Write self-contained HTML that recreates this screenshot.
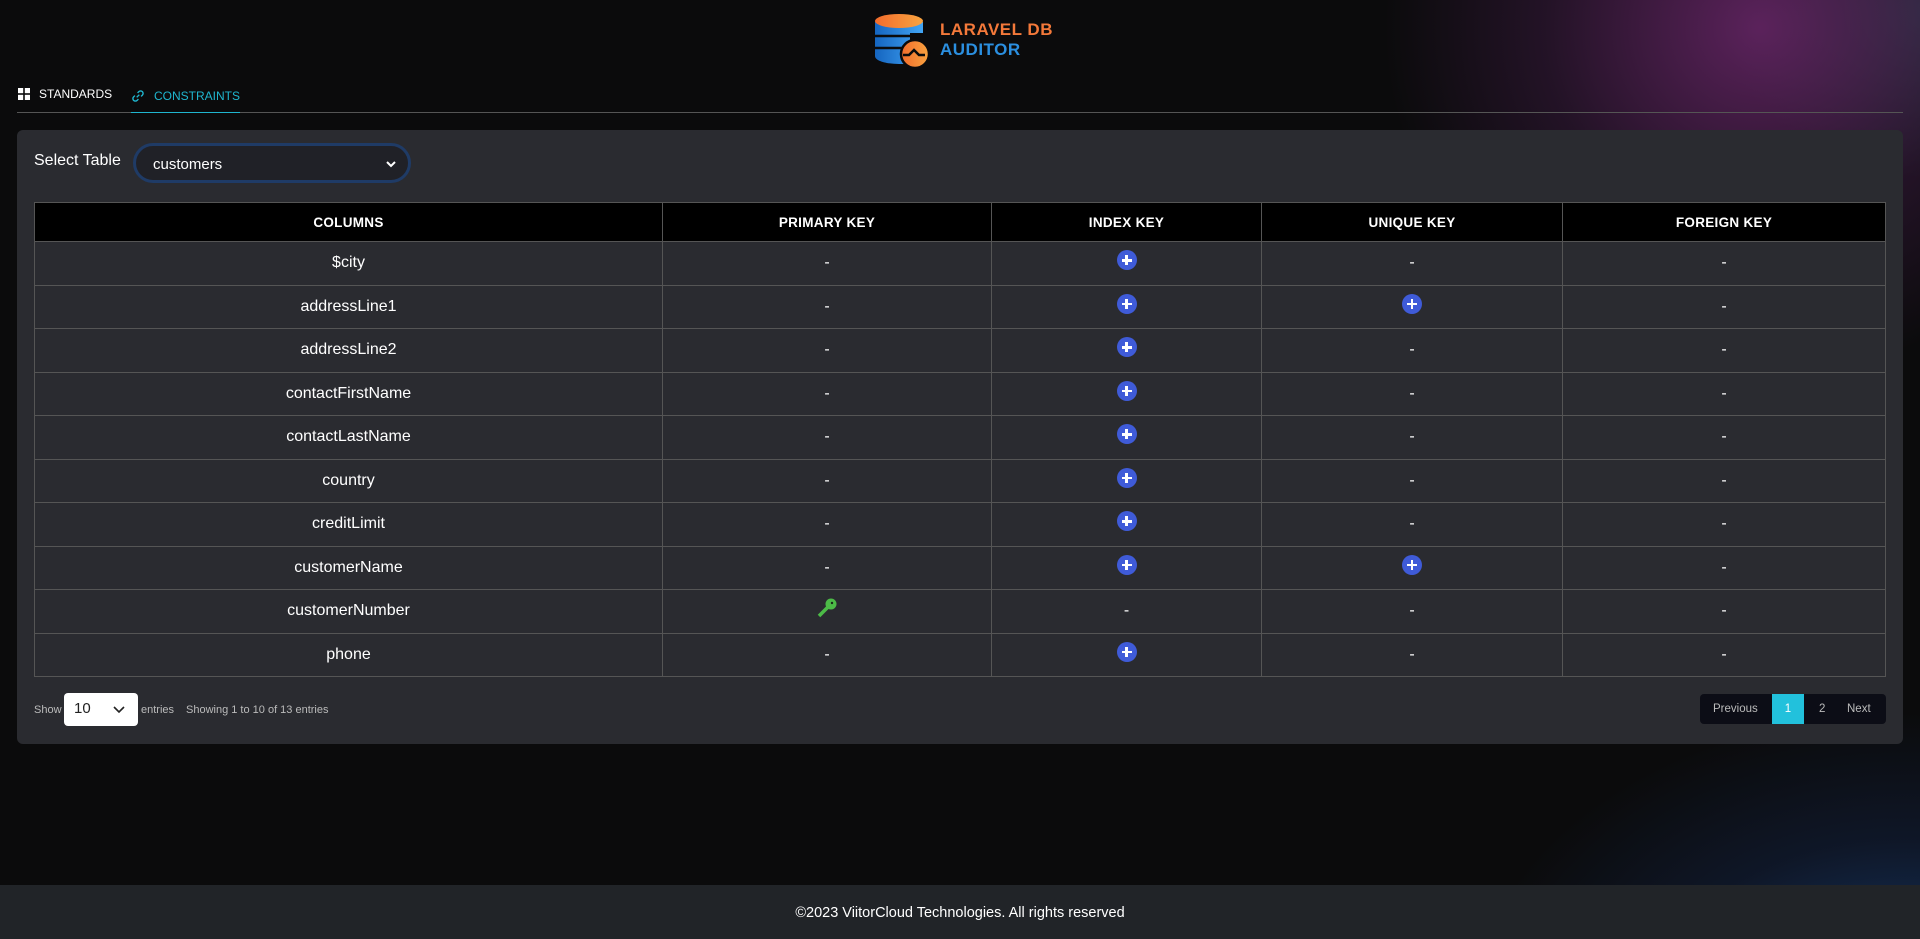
<!DOCTYPE html>
<html><head><meta charset="utf-8"><style>
*{box-sizing:border-box;margin:0;padding:0}
html,body{width:1920px;height:939px;overflow:hidden}
body{background:#0b0b0c;font-family:"Liberation Sans","DejaVu Sans",sans-serif;color:#fff;position:relative}
.bg{position:absolute;left:0;top:0;width:1920px;height:939px;overflow:hidden}
.glow1{position:absolute;left:1380px;top:-260px;width:760px;height:640px;background:radial-gradient(ellipse at 50% 45%,rgba(95,35,95,.95),rgba(55,25,60,.55) 40%,rgba(0,0,0,0) 70%)}
.glow0{position:absolute;left:1720px;top:-160px;width:420px;height:340px;background:radial-gradient(ellipse,rgba(30,80,80,.8),rgba(0,0,0,0) 70%)}
.glow2{position:absolute;left:1450px;top:700px;width:760px;height:460px;background:radial-gradient(ellipse at 60% 70%,rgba(25,65,120,.95),rgba(20,40,80,.4) 40%,rgba(0,0,0,0) 68%)}
.logo{position:absolute;left:873px;top:12px}
.lt{position:absolute;left:940px;font-weight:bold;font-size:17px;letter-spacing:.5px}
.tabs{position:absolute;left:17px;top:84px;width:1886px;height:29px;border-bottom:1px solid #555}
.tab{position:absolute;top:3px;font-size:12px;display:flex;align-items:center;gap:9px}
.card{position:absolute;left:17px;top:130px;width:1886px;height:614px;background:#2a2b30;border-radius:6px}
.sel{position:absolute;left:116px;top:13px;width:278px;height:40px;border:3px solid #1f3b66;border-radius:20px;background:#202127;font-size:15px;padding:10px 0 0 17px}
table{position:absolute;left:17px;top:72px;width:1852px;border-collapse:collapse;font-size:16px}
th{background:#000;height:39px;font-size:13.5px;font-weight:bold;border:1px solid #555;letter-spacing:.3px}
td{height:43.5px;border:1px solid #555;text-align:center;color:#fff}
.p{display:inline-block;width:20px;height:20px;border-radius:50%;background:#3f5bd8;position:relative;vertical-align:middle;top:-3px}
.p:before{content:"";position:absolute;left:5px;top:9px;width:10px;height:2.5px;background:#fff}
.p:after{content:"";position:absolute;left:8.8px;top:5px;width:2.5px;height:10px;background:#fff}
.foot{position:absolute;left:0;top:885px;width:1920px;height:54px;background:#212428;text-align:center;font-size:14.5px;padding-top:20px}
</style></head><body>
<div class="bg"><div class="glow0"></div><div class="glow1"></div><div class="glow2"></div></div>
<svg class="logo" width="62" height="58" viewBox="0 0 62 58">
<defs><linearGradient id="o" x1="0" x2="1"><stop offset="0" stop-color="#f26c2c"/><stop offset="1" stop-color="#f9a440"/></linearGradient>
<linearGradient id="b" x1="0" x2="1"><stop offset="0" stop-color="#1565c0"/><stop offset="1" stop-color="#42a5f5"/></linearGradient></defs>
<path d="M2 10 v34 c0 5 12 8 24 8 c4 0 8 0 11 -1 v-30 H50 v-11z" fill="url(#b)"/>
<path d="M2 24 h46 M2 36 h30" stroke="#0b0b0c" stroke-width="2.5"/>
<ellipse cx="26" cy="9" rx="24" ry="7" fill="url(#o)"/>
<circle cx="42" cy="42" r="14" fill="url(#o)" stroke="#0b0b0c" stroke-width="2.5"/>
<path d="M30 43 h6 l5 -5 l5 5 h6" stroke="#0b0b0c" stroke-width="2.5" fill="none"/>
</svg>
<div class="lt" style="top:20px;color:#f4793a">LARAVEL DB</div>
<div class="lt" style="top:40px;color:#2b8fe0">AUDITOR</div>
<div class="tabs">
<div class="tab" style="left:1px"><svg width="12" height="12"><rect x="0" y="0" width="5.2" height="5.2" fill="#fff"/><rect x="6.8" y="0" width="5.2" height="5.2" fill="#fff"/><rect x="0" y="6.8" width="5.2" height="5.2" fill="#fff"/><rect x="6.8" y="6.8" width="5.2" height="5.2" fill="#fff"/></svg>STANDARDS</div>
<div class="tab" style="left:114px;color:#1fb6cf;border-bottom:1px solid #1fb6cf;padding-bottom:7px;top:3px;height:26px"><svg width="14" height="14" viewBox="0 0 16 16" fill="none" stroke="#1fb6cf" stroke-width="1.6"><path d="M6.5 9.5 l3-3"/><path d="M7.5 4.5 l1.5-1.5 a2.8 2.8 0 0 1 4 4 l-1.5 1.5"/><path d="M8.5 11.5 l-1.5 1.5 a2.8 2.8 0 0 1 -4 -4 l1.5 -1.5"/></svg>CONSTRAINTS</div>
</div>
<div class="card">
<div style="position:absolute;left:17px;top:22px;font-size:16px">Select Table</div>
<div class="sel">customers<svg style="position:absolute;right:12px;top:15px" width="10" height="7"><path d="M1 1 l4 4 l4 -4" stroke="#fff" stroke-width="2" fill="none"/></svg></div>
<table>
<tr><th style="width:628px">COLUMNS</th><th style="width:329px">PRIMARY KEY</th><th style="width:270px">INDEX KEY</th><th style="width:301px">UNIQUE KEY</th><th>FOREIGN KEY</th></tr>
<tr><td>$city</td><td>-</td><td><span class="p"></span></td><td>-</td><td>-</td></tr>
<tr><td>addressLine1</td><td>-</td><td><span class="p"></span></td><td><span class="p"></span></td><td>-</td></tr>
<tr><td>addressLine2</td><td>-</td><td><span class="p"></span></td><td>-</td><td>-</td></tr>
<tr><td>contactFirstName</td><td>-</td><td><span class="p"></span></td><td>-</td><td>-</td></tr>
<tr><td>contactLastName</td><td>-</td><td><span class="p"></span></td><td>-</td><td>-</td></tr>
<tr><td>country</td><td>-</td><td><span class="p"></span></td><td>-</td><td>-</td></tr>
<tr><td>creditLimit</td><td>-</td><td><span class="p"></span></td><td>-</td><td>-</td></tr>
<tr><td>customerName</td><td>-</td><td><span class="p"></span></td><td><span class="p"></span></td><td>-</td></tr>
<tr><td>customerNumber</td><td><svg width="22" height="22" viewBox="0 0 22 22" style="vertical-align:middle;position:relative;top:-3px"><circle cx="15" cy="7" r="5.5" fill="#4cbb47"/><path d="M12 10 L3 19" stroke="#4cbb47" stroke-width="3.5"/><path d="M5 15 l2 2 M7 13 l2 2" stroke="#4cbb47" stroke-width="2"/><circle cx="16" cy="6" r="1.2" fill="#1a2a1a"/></svg></td><td>-</td><td>-</td><td>-</td></tr>
<tr><td>phone</td><td>-</td><td><span class="p"></span></td><td>-</td><td>-</td></tr>
</table>
<div style="position:absolute;left:17px;top:574px;font-size:11px;color:#bbb">Show</div>
<div style="position:absolute;left:47px;top:563px;width:74px;height:33px;background:#fff;border-radius:4px;color:#222;font-size:15px;padding:7px 0 0 10px">10<svg style="position:absolute;right:13px;top:13px" width="12" height="8"><path d="M1 1 l5 5 l5 -5" stroke="#222" stroke-width="1.6" fill="none"/></svg></div>
<div style="position:absolute;left:124px;top:574px;font-size:11px;color:#bbb">entries</div>
<div style="position:absolute;left:169px;top:574px;font-size:11px;color:#bbb">Showing 1 to 10 of 13 entries</div>
<div style="position:absolute;left:1683px;top:564px;width:186px;height:30px;background:#0c0d16;border-radius:4px;font-size:11.5px;color:#bbb">
<span style="position:absolute;left:13px;top:9px">Previous</span>
<span style="position:absolute;left:72px;top:0;width:32px;height:30px;background:#22c1dc;color:#fff;text-align:center;padding-top:9px">1</span>
<span style="position:absolute;left:119px;top:9px">2</span>
<span style="position:absolute;left:147px;top:9px">Next</span></div>
</div>
<div class="foot">©2023 ViitorCloud Technologies. All rights reserved</div>
</body></html>
